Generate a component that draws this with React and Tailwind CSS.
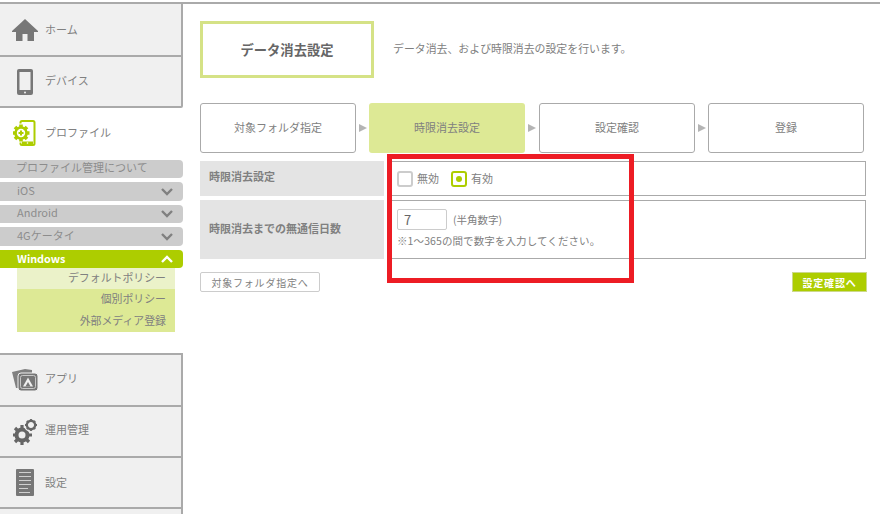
import React from 'react';

const HomeIcon = () => (
  <svg width="26" height="22" viewBox="0 0 26 22" className="text-[#777]"><path fill="currentColor" d="M13 0 L26 12 L26 13 L22 13 L22 22 L15.5 22 L15.5 15 L10.5 15 L10.5 22 L4 22 L4 13 L0 13 L0 12 L9 3.7 Z" /></svg>
);

const DeviceIcon = () => (
  <svg width="16" height="26" viewBox="0 0 16 26"><rect width="16" height="26" rx="2" fill="#777" /><rect x="2.5" y="3" width="11" height="18" fill="#f0f0f0" /><circle cx="8" cy="23.5" r="1" fill="#f0f0f0" /></svg>
);

const ProfileIcon = () => (
  <svg width="23" height="26" viewBox="0 0 23 26">
    <rect x="7.5" y="1" width="14" height="24" rx="1.5" fill="#fff" stroke="#adcd00" strokeWidth="2" />
    <rect x="9" y="21.5" width="11" height="2.6" fill="#adcd00" />
    <circle cx="14.5" cy="23" r="0.8" fill="#fff" />
    <rect x="6" y="3.5" width="3" height="19" fill="#fff" />
    <circle cx="8" cy="13" r="6.8" fill="#adcd00" />
    <path stroke="#adcd00" strokeWidth="3.6" d="M8 4.5V21.5M-0.5 13H16.5M2 7 14 19M14 7 2 19" />
    <circle cx="8" cy="13" r="4.2" fill="#fff" />
    <path fill="#adcd00" d="M7 10.5h2v1.5h1.5v2H9v1.5H7V14H5.5v-2H7Z" />
  </svg>
);

const AppIcon = () => (
  <svg width="26" height="22" viewBox="0 0 26 22">
    <path fill="#808080" d="M0 3 L13 0 L20 1 L20 5 L8 5 L6 19 L4 19 Z" />
    <rect x="6" y="4" width="20" height="18" rx="3" fill="#777" stroke="#f0f0f0" strokeWidth="1" />
    <rect x="8.5" y="6.5" width="15" height="13" rx="2" fill="#777" stroke="#c8c8c8" strokeWidth="1" />
    <path fill="#f0f0f0" d="M16 8.5 L21 17.5 L11 17.5Z" />
    <path fill="#777" d="M16 13 L18.5 17.5 L13.5 17.5Z" />
  </svg>
);

const GearIcon = () => (
  <svg width="24" height="26" viewBox="0 0 24 26">
    <circle cx="9" cy="16" r="7.5" fill="#666" />
    <path stroke="#666" strokeWidth="3.2" d="M9 6V26M-1 16H19M2 9 16 23M16 9 2 23" />
    <circle cx="9" cy="16" r="3.5" fill="#f0f0f0" />
    <circle cx="18" cy="6" r="7" fill="#f0f0f0" />
    <circle cx="18" cy="6" r="4.2" fill="none" stroke="#666" strokeWidth="2.4" />
    <path stroke="#666" strokeWidth="1.8" d="M18 0V3M18 9V12M12 6H15M21 6H24M13.8 1.8 15.8 3.8M20.2 8.2 22.2 10.2M22.2 1.8 20.2 3.8M15.8 8.2 13.8 10.2" />
  </svg>
);

const DocIcon = () => (
  <svg width="18" height="27" viewBox="0 0 18 27">
    <rect width="18" height="27" rx="1" fill="#777" />
    <path stroke="#d0d0d0" strokeWidth="1" d="M3 3.5H15M3 7.5H15M3 11.5H15M3 15.5H15M3 19.5H12M3 23.5H14" />
  </svg>
);

const Chevron = ({ up, color }) => (
  <svg width="12" height="8" viewBox="0 0 12 8" className="mr-2.5">
    <path d={up ? 'M1 7 L6 2 L11 7' : 'M1 1 L6 6 L11 1'} fill="none" stroke={color} strokeWidth="2.4" />
  </svg>
);

const NavItem = ({ icon, label, h, lift = 'mb-[3px]' }) => (
  <div className={`flex items-center bg-[#f0f0f0] border-r-2 border-[#aaa] w-[183px] ${h}`}>
    <div className="w-[45px] flex justify-center pl-[4px]">{icon}</div>
    <span className={`text-[11px] text-[#808080] ${lift}`}>{label}</span>
  </div>
);

const Divider = () => <div className="h-[2px] bg-[#aaa] w-[183px]" />;

const MenuBar = ({ label, mb = 'mb-[4px]', h = 'h-[19px]', lift = '-mt-[2px]', chevron }) => (
  <div className={`flex items-center justify-between bg-[#cccccc] rounded-r-[4px] pl-[17px] text-[11px] text-[#8c8c8c] w-[183px] ${h} ${mb}`}>
    <span className={lift}>{label}</span>
    {chevron && <Chevron color="#808080" />}
  </div>
);

const Sidebar = () => (
  <aside className="w-[183px] shrink-0 flex flex-col">
    <NavItem icon={<HomeIcon />} label="ホーム" h="h-[51px]" lift="mb-[1px]" />
    <Divider />
    <NavItem icon={<DeviceIcon />} label="デバイス" h="h-[49px]" />
    <div className="h-[2px] bg-[#aaa] w-[183px] rounded-br-[2px]" />
    <div className="h-[245px] w-[183px] flex flex-col">
      <div className="flex items-center h-[52px]">
        <div className="w-[45px] flex justify-center pl-[4px] -mt-[2px]"><ProfileIcon /></div>
        <span className="text-[11px] text-[#808080] mb-[4px]">プロファイル</span>
      </div>
      <div className="flex items-center bg-[#cccccc] rounded-r-[4px] pl-[16px] text-[11px] text-[#8c8c8c] h-[18px] mb-[4px] whitespace-nowrap">
        <span className="-mt-[3px]">プロファイル管理について</span>
      </div>
      <MenuBar label="iOS" chevron />
      <MenuBar label="Android" h="h-[18px]" lift="-mt-[4px]" chevron />
      <MenuBar label="4Gケータイ" chevron />
      <div className="flex items-center justify-between bg-[#adcd00] rounded-r-[4px] pl-[17px] text-[10.8px] font-semibold text-white h-[18px]">
        <span className="-mt-[2px]">Windows</span>
        <Chevron up color="#ffffff" />
      </div>
      <div className="ml-[17px] w-[158px] text-[10.9px] text-[#808080] text-right">
        <div className="h-[21px] bg-[#ebf2c9] pr-[9px] leading-[18px]">デフォルトポリシー</div>
        <div className="h-[22px] bg-[#dde995] pr-[9px] leading-[19px]">個別ポリシー</div>
        <div className="h-[21px] bg-[#dde995] pr-[9px] leading-[18px]">外部メディア登録</div>
      </div>
    </div>
    <Divider />
    <NavItem icon={<AppIcon />} label="アプリ" h="h-[50px]" lift="mb-[4px]" />
    <Divider />
    <NavItem icon={<GearIcon />} label="運用管理" h="h-[49px]" lift="mb-[4px]" />
    <Divider />
    <NavItem icon={<DocIcon />} label="設定" h="h-[49px]" lift="mb-[1px]" />
    <Divider />
    <div className="flex-1 bg-[#f0f0f0] border-r-2 border-[#aaa] w-[183px]" />
  </aside>
);

const Step = ({ label, active }) => (
  <div className={`w-[156px] h-[50px] rounded-[3px] flex items-center justify-center pb-[2px] text-[11px] text-[#808080] ${active ? 'bg-[#dde995]' : 'border border-[#aaa] bg-white'}`}>
    {label}
  </div>
);

const StepArrow = ({ w = 'w-[13px]' }) => (
  <div className={`${w} flex justify-start pl-[3px]`}>
    <svg width="8" height="8" viewBox="0 0 8 8"><path d="M0 0 L8 4 L0 8Z" fill="#b4b4b4" /></svg>
  </div>
);

const App = () => (
  <div className="relative w-[880px] h-[514px] overflow-hidden bg-white font-['Noto_Sans_CJK_JP','Noto_Sans',sans-serif]">
    <div className="h-[4px] border-b-2 border-[#aaa] bg-white" />
    <div className="flex h-[510px]">
      <Sidebar />
      <main className="flex-1 pl-[17px] pr-[13px] pt-[17px]">
        <div className="flex items-center">
          <div className="w-[174px] h-[57px] border-[3px] border-[#d5e286] flex items-center justify-center text-[13.3px] font-bold text-[#666]">データ消去設定</div>
          <p className="ml-[19px] -mt-[3px] text-[10.9px] text-[#808080]">データ消去、および時限消去の設定を行います。</p>
        </div>
        <div className="flex items-center mt-[25px] w-[664px]">
          <Step label="対象フォルダ指定" />
          <StepArrow />
          <Step label="時限消去設定" active />
          <StepArrow w="w-[14px]" />
          <Step label="設定確認" />
          <StepArrow />
          <Step label="登録" />
        </div>
        <div className="flex mt-[8px] h-[35px]">
          <div className="w-[184px] bg-[#e4e4e4] pl-[9px] pb-[5px] flex items-center text-[11px] font-bold text-[#808080]">時限消去設定</div>
          <div className="ml-[4px] w-[478px] border border-[#aaa] flex items-center pl-[8px] text-[11px] text-[#808080]">
            <span className="w-[16px] h-[16px] rounded-[3px] border-2 border-[#ccc] bg-white" />
            <span className="ml-[4px]">無効</span>
            <span className="ml-[12px] w-[16px] h-[16px] rounded-[3px] border-2 border-[#adcd00] bg-white flex items-center justify-center">
              <span className="w-[6px] h-[6px] rounded-full bg-[#adcd00]" />
            </span>
            <span className="ml-[4px]">有効</span>
          </div>
        </div>
        <div className="flex mt-[4px] h-[59px]">
          <div className="w-[184px] bg-[#e4e4e4] pl-[9px] pb-[2px] flex items-center text-[11px] font-bold text-[#808080]">時限消去までの無通信日数</div>
          <div className="ml-[4px] w-[478px] border border-[#aaa] pl-[8px] pt-[8px] text-[#808080]">
            <div className="flex items-center">
              <div className="w-[50px] h-[21px] border border-[#ccc] rounded-[2px] pl-[6px] text-[13px] leading-[19px] text-[#666]">7</div>
              <span className="ml-[6px] text-[10.5px]">(半角数字)</span>
            </div>
            <p className="mt-[3px] text-[10.5px] tracking-[0.1px]">※1～365の間で数字を入力してください。</p>
          </div>
        </div>
        <div className="flex justify-between items-start mt-[13px]">
          <button className="w-[120px] h-[20px] border border-[#ccc] rounded-[2px] text-[10px] tracking-[0.8px] text-[#808080]">対象フォルダ指定へ</button>
          <button className="w-[75px] h-[20px] bg-[#adcd00] border border-[#ccd98a] text-[10px] font-semibold tracking-[0.8px] text-white">設定確認へ</button>
        </div>
      </main>
    </div>
    <div className="absolute left-[387px] top-[154px] w-[247px] h-[129px] border-[5px] border-[#ed1c24]" />
  </div>
);

export default App;
